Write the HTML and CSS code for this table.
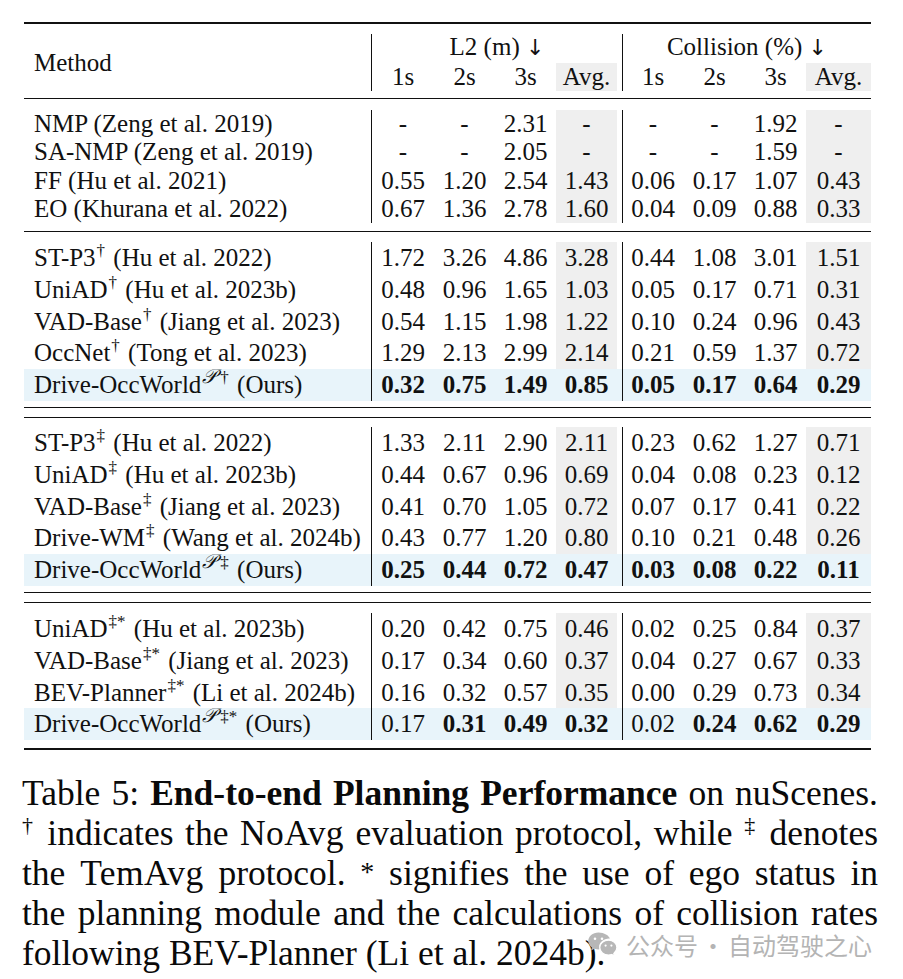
FILE: index.html
```html
<!DOCTYPE html>
<html lang="en">
<head>
<meta charset="utf-8">
<title>Table 5: End-to-end Planning Performance</title>
<link rel="stylesheet" href="styles.css">
</head>
<body>
<div class="page">
  <div class="tbl">
    <div class="head">
      <div class="mth vl1 hm">Method</div>
      <div class="grp g-l2">L2 (m) <span class="arr">↓</span></div>
      <div class="grp g-col vl2">Collision (%) <span class="arr">↓</span></div>
      <div class="n">1s</div><div class="n">2s</div><div class="n">3s</div><div class="n av1">Avg.</div>
      <div class="n vl2">1s</div><div class="n">2s</div><div class="n">3s</div><div class="n av2">Avg.</div>
    </div>

    <div class="group g1">
      <div class="row"><div class="mth vl1">NMP (Zeng et al. 2019)</div><div class="n">-</div><div class="n">-</div><div class="n">2.31</div><div class="n av1">-</div><div class="n vl2">-</div><div class="n">-</div><div class="n">1.92</div><div class="n av2">-</div></div>
      <div class="row"><div class="mth vl1">SA-NMP (Zeng et al. 2019)</div><div class="n">-</div><div class="n">-</div><div class="n">2.05</div><div class="n av1">-</div><div class="n vl2">-</div><div class="n">-</div><div class="n">1.59</div><div class="n av2">-</div></div>
      <div class="row"><div class="mth vl1">FF (Hu et al. 2021)</div><div class="n">0.55</div><div class="n">1.20</div><div class="n">2.54</div><div class="n av1">1.43</div><div class="n vl2">0.06</div><div class="n">0.17</div><div class="n">1.07</div><div class="n av2">0.43</div></div>
      <div class="row"><div class="mth vl1">EO (Khurana et al. 2022)</div><div class="n">0.67</div><div class="n">1.36</div><div class="n">2.78</div><div class="n av1">1.60</div><div class="n vl2">0.04</div><div class="n">0.09</div><div class="n">0.88</div><div class="n av2">0.33</div></div>
    </div>

    <div class="group g2">
      <div class="row"><div class="mth vl1">ST-P3<sup class="sp">†</sup> (Hu et al. 2022)</div><div class="n">1.72</div><div class="n">3.26</div><div class="n">4.86</div><div class="n av1">3.28</div><div class="n vl2">0.44</div><div class="n">1.08</div><div class="n">3.01</div><div class="n av2">1.51</div></div>
      <div class="row"><div class="mth vl1">UniAD<sup class="sp">†</sup> (Hu et al. 2023b)</div><div class="n">0.48</div><div class="n">0.96</div><div class="n">1.65</div><div class="n av1">1.03</div><div class="n vl2">0.05</div><div class="n">0.17</div><div class="n">0.71</div><div class="n av2">0.31</div></div>
      <div class="row"><div class="mth vl1">VAD-Base<sup class="sp">†</sup> (Jiang et al. 2023)</div><div class="n">0.54</div><div class="n">1.15</div><div class="n">1.98</div><div class="n av1">1.22</div><div class="n vl2">0.10</div><div class="n">0.24</div><div class="n">0.96</div><div class="n av2">0.43</div></div>
      <div class="row"><div class="mth vl1">OccNet<sup class="sp">†</sup> (Tong et al. 2023)</div><div class="n">1.29</div><div class="n">2.13</div><div class="n">2.99</div><div class="n av1">2.14</div><div class="n vl2">0.21</div><div class="n">0.59</div><div class="n">1.37</div><div class="n av2">0.72</div></div>
      <div class="row ours"><div class="mth vl1">Drive-OccWorld<sup class="sp"><span class="cal">𝒫</span>†</sup> (Ours)</div><div class="n b">0.32</div><div class="n b">0.75</div><div class="n b">1.49</div><div class="n av1 b">0.85</div><div class="n vl2 b">0.05</div><div class="n b">0.17</div><div class="n b">0.64</div><div class="n av2 b">0.29</div></div>
    </div>

    <div class="group g3 dbl">
      <div class="row"><div class="mth vl1">ST-P3<sup class="sp">‡</sup> (Hu et al. 2022)</div><div class="n">1.33</div><div class="n">2.11</div><div class="n">2.90</div><div class="n av1">2.11</div><div class="n vl2">0.23</div><div class="n">0.62</div><div class="n">1.27</div><div class="n av2">0.71</div></div>
      <div class="row"><div class="mth vl1">UniAD<sup class="sp">‡</sup> (Hu et al. 2023b)</div><div class="n">0.44</div><div class="n">0.67</div><div class="n">0.96</div><div class="n av1">0.69</div><div class="n vl2">0.04</div><div class="n">0.08</div><div class="n">0.23</div><div class="n av2">0.12</div></div>
      <div class="row"><div class="mth vl1">VAD-Base<sup class="sp">‡</sup> (Jiang et al. 2023)</div><div class="n">0.41</div><div class="n">0.70</div><div class="n">1.05</div><div class="n av1">0.72</div><div class="n vl2">0.07</div><div class="n">0.17</div><div class="n">0.41</div><div class="n av2">0.22</div></div>
      <div class="row"><div class="mth vl1">Drive-WM<sup class="sp">‡</sup> (Wang et al. 2024b)</div><div class="n">0.43</div><div class="n">0.77</div><div class="n">1.20</div><div class="n av1">0.80</div><div class="n vl2">0.10</div><div class="n">0.21</div><div class="n">0.48</div><div class="n av2">0.26</div></div>
      <div class="row ours"><div class="mth vl1">Drive-OccWorld<sup class="sp"><span class="cal">𝒫</span>‡</sup> (Ours)</div><div class="n b">0.25</div><div class="n b">0.44</div><div class="n b">0.72</div><div class="n av1 b">0.47</div><div class="n vl2 b">0.03</div><div class="n b">0.08</div><div class="n b">0.22</div><div class="n av2 b">0.11</div></div>
    </div>

    <div class="group g4 dbl">
      <div class="row"><div class="mth vl1">UniAD<sup class="sp">‡*</sup> (Hu et al. 2023b)</div><div class="n">0.20</div><div class="n">0.42</div><div class="n">0.75</div><div class="n av1">0.46</div><div class="n vl2">0.02</div><div class="n">0.25</div><div class="n">0.84</div><div class="n av2">0.37</div></div>
      <div class="row"><div class="mth vl1">VAD-Base<sup class="sp">‡*</sup> (Jiang et al. 2023)</div><div class="n">0.17</div><div class="n">0.34</div><div class="n">0.60</div><div class="n av1">0.37</div><div class="n vl2">0.04</div><div class="n">0.27</div><div class="n">0.67</div><div class="n av2">0.33</div></div>
      <div class="row"><div class="mth vl1">BEV-Planner<sup class="sp">‡*</sup> (Li et al. 2024b)</div><div class="n">0.16</div><div class="n">0.32</div><div class="n">0.57</div><div class="n av1">0.35</div><div class="n vl2">0.00</div><div class="n">0.29</div><div class="n">0.73</div><div class="n av2">0.34</div></div>
      <div class="row ours"><div class="mth vl1">Drive-OccWorld<sup class="sp"><span class="cal">𝒫</span>‡*</sup> (Ours)</div><div class="n">0.17</div><div class="n b">0.31</div><div class="n b">0.49</div><div class="n av1 b">0.32</div><div class="n vl2">0.02</div><div class="n b">0.24</div><div class="n b">0.62</div><div class="n av2 b">0.29</div></div>
    </div>
  </div>

  <div class="cap">
    <div class="ln">Table 5: <b>End-to-end Planning Performance</b> on nuScenes.</div>
    <div class="ln"><sup class="csp">†</sup> indicates the <span class="cm">NoAvg</span> evaluation protocol, while <sup class="csp">‡</sup> denotes</div>
    <div class="ln">the <span class="cm">TemAvg</span> protocol. <sup class="cst">*</sup> signifies the use of ego status in</div>
    <div class="ln">the planning module and the calculations of collision rates</div>
    <div class="ln last">following BEV-Planner (Li et al. 2024b).</div>
  </div>

  <div class="wm">
    <svg class="wx" width="31" height="27" viewBox="0 0 31 27" aria-hidden="true">
      <path d="M11.5 1.5C5.7 1.5 1.3 5.3 1.3 10c0 2.6 1.4 4.9 3.6 6.5l-0.9 3.1 3.6-1.8c1.2 0.4 2.5 0.6 3.9 0.6 0.4 0 0.8 0 1.2-0.1-0.3-0.8-0.4-1.6-0.4-2.4 0-4.6 4.4-8.3 9.7-8.3 0.3 0 0.6 0 0.9 0C22 4.6 17.2 1.5 11.5 1.5z" fill="#b7b7b7"/>
      <circle cx="8" cy="7.8" r="1.3" fill="#fff"/>
      <circle cx="15" cy="7.8" r="1.3" fill="#fff"/>
      <path d="M21.6 9.2c-4.9 0-8.8 3.3-8.8 7.4s3.9 7.4 8.8 7.4c1.1 0 2.1-0.2 3.1-0.5l2.9 1.5-0.8-2.6c1.9-1.4 3.1-3.5 3.1-5.8 0-4.1-3.9-7.4-8.3-7.4z" fill="#b7b7b7" stroke="#fff" stroke-width="1.2"/>
      <circle cx="18.6" cy="14.6" r="1.1" fill="#fff"/>
      <circle cx="24.4" cy="14.6" r="1.1" fill="#fff"/>
    </svg>
    <span class="wt">公众号</span><span class="wd">·</span><span class="wt">自动驾驶之心</span>
  </div>
</div>
</body>
</html>
```

FILE: styles.css
```css
html, body {
  margin: 0;
  padding: 0;
  background: #ffffff;
}

body {
  color: #111111;
  font-family: "Liberation Serif", "Times New Roman", serif;
}

.page {
  position: relative;
  width: 903px;
  height: 979px;
  box-sizing: border-box;
  padding: 22px 0 0 24px;
  overflow: hidden;
}

.tbl {
  width: 847px;
  border-top: 2px solid #111;
  border-bottom: 2px solid #111;
  font-size: 25px;
}

.head,
.row {
  display: grid;
  grid-template-columns: 348px 62px 61px 61px 66px 62px 61px 61px 65px;
}

.head {
  grid-template-rows: 29px 28px;
  padding: 10px 0 7px;
  border-bottom: 1px solid #111;
  line-height: 28px;
}

.hm {
  grid-row: span 2;
  display: flex;
  align-items: center;
}

.grp {
  grid-column: span 4;
  text-align: center;
  line-height: 26px;
}

.g-col {
  padding-left: 1px;
}

.arr {
  font-family: "DejaVu Sans", sans-serif;
  font-size: 22px;
}

.mth {
  padding-left: 10px;
  white-space: nowrap;
}

.n {
  text-align: center;
  white-space: nowrap;
}

.b {
  font-weight: bold;
}

.av1 {
  background: #efefef content-box;
  padding-right: 5px;
}

.av2 {
  background: #efefef;
}

.vl1 {
  box-shadow: inset -1px 0 0 #111;
}

.vl2 {
  box-shadow: inset 1px 0 0 #111;
}

.group {
  border-bottom: 1px solid #111;
}

.g1 {
  padding: 11px 0 8px;
}

.g1 .row {
  height: 28.25px;
  line-height: 28.25px;
}

.g2 {
  padding: 10px 0 6px;
}

.g3 {
  padding: 9px 0 6px;
}

.g4 {
  padding: 10px 0 8px;
  border-bottom: none;
}

.g2 .row,
.g3 .row,
.g4 .row {
  height: 31.8px;
  line-height: 31.8px;
}

.dbl {
  margin-top: 9px;
  border-top: 1px solid #111;
}

.ours {
  background: #e8f4fa;
}

.ours .av1,
.ours .av2 {
  background: none;
}

.sp {
  font-size: 17px;
  line-height: 0;
  vertical-align: 10px;
  margin-left: 1px;
  margin-right: 2px;
}

.cal {
  font-family: "DejaVu Serif", "DejaVu Sans", serif;
  font-style: italic;
  font-size: 20px;
  margin-right: 4px;
}

.cap {
  margin: 23px 0 0 -2px;
  width: 856px;
  font-size: 35.5px;
  line-height: 40px;
  color: #0a0a0a;
}

.ln {
  text-align: justify;
  text-align-last: justify;
  white-space: nowrap;
}

.ln.last {
  text-align: left;
  text-align-last: left;
}

.csp {
  font-size: 22px;
  line-height: 0;
  vertical-align: 13px;
}

.cst {
  font-size: 28px;
  line-height: 0;
  vertical-align: 4px;
}

.cm {
  letter-spacing: 0.4px;
}

.wm {
  position: absolute;
  left: 587px;
  top: 931px;
  display: flex;
  align-items: center;
  color: #b4b4b4;
  font-family: "Noto Sans CJK SC", "Noto Sans", sans-serif;
  font-size: 24px;
  line-height: 18px;
}

.wx {
  margin-right: 8px;
}

.wd {
  display: inline-block;
  width: 30px;
  text-align: center;
}
```
